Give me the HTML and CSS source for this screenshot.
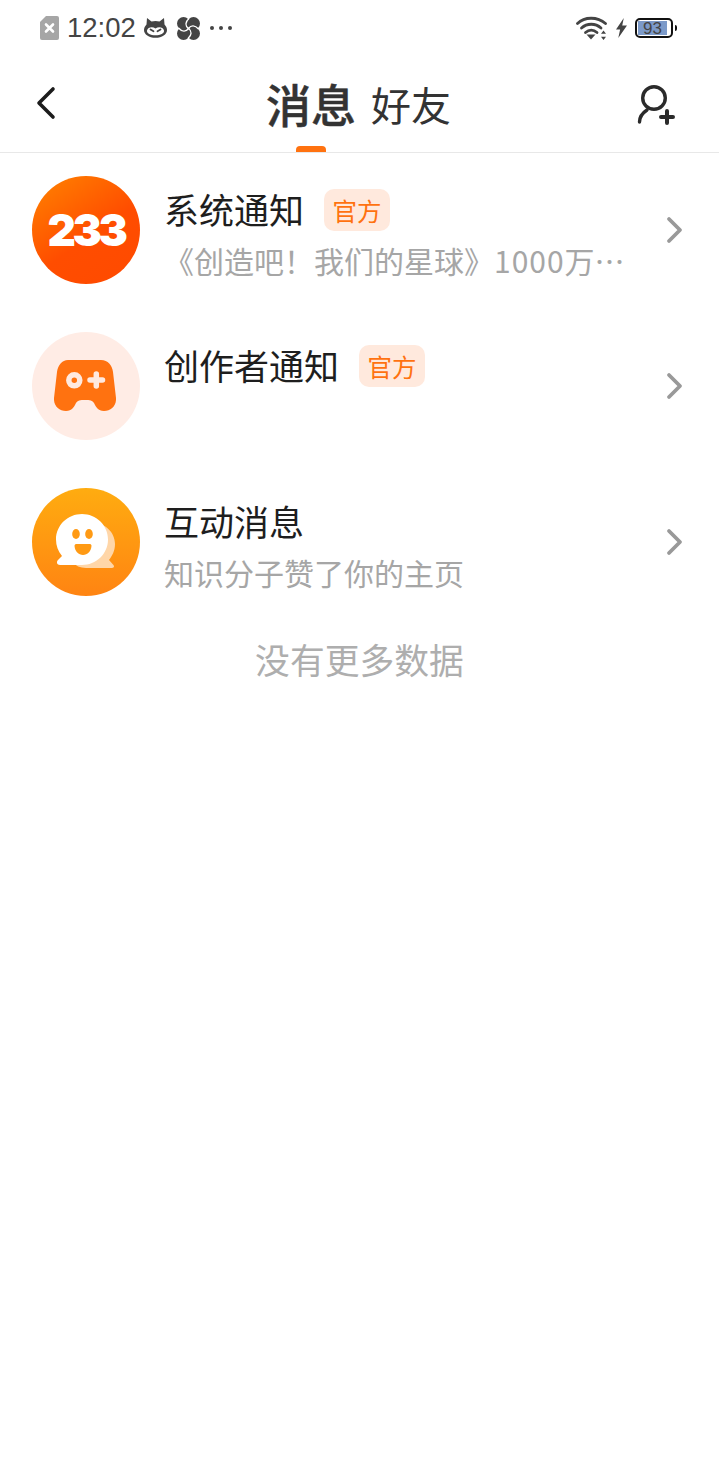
FILE: index.html
```html
<!DOCTYPE html>
<html lang="zh-CN">
<head>
	<meta charset="utf-8">
	<meta name="viewport" content="width=device-width, initial-scale=1.0">
	<title>消息</title>
	<link rel="stylesheet" href="styles.css">
</head>
<body>
	<div class="status">
		<svg class="sim" width="19" height="24" viewBox="0 0 19 24">
			<path d="M6 0H17a2 2 0 0 1 2 2V22a2 2 0 0 1-2 2H2a2 2 0 0 1-2-2V6Z" fill="#a6a6a6"/>
			<path d="M6 8.500l7 7M13 8.500l-7 7" stroke="#fff" stroke-width="2.600" stroke-linecap="round"/>
		</svg>
		<span class="clock">12:02</span>
		<svg class="cat" width="23" height="20" viewBox="0 0 23 20">
			<path d="M3 0l4.500 3.500a14 14 0 0 1 8 0L20 0l.5 6.500C22.300 8.500 23 10.300 23 12c0 4.500-5 7.800-11.500 7.800S0 16.500 0 12C0 10.300.7 8.500 2.500 6.500Z" fill="#444"/>
			<path d="M3 12.500c1-3.500 5.500-4 8.500-2 3-2 7.500-1.500 8.500 2 .5 2.800-3.500 4.800-8.500 4.800s-9-2-8.500-4.800Z" fill="#fff"/>
			<path d="M6.500 11.500l3 1.800M16.500 11.500l-3 1.800" stroke="#444" stroke-width="1.800" stroke-linecap="round"/>
		</svg>
		<svg class="fan" width="23" height="23" viewBox="0 0 23 23">
			<g fill="#444">
				<circle cx="6.500" cy="6.500" r="6.500"/>
				<circle cx="16.500" cy="6.500" r="6.500"/>
				<circle cx="16.500" cy="16.500" r="6.500"/>
				<circle cx="6.500" cy="16.500" r="6.500"/>
			</g>
			<g fill="none" stroke="#fff" stroke-width="1.300">
				<path d="M11.500 11.500C8 9 8 5 12 1.500"/>
				<path d="M11.500 11.500C14 8 18 8 21.500 12"/>
				<path d="M11.500 11.500C15 14 15 18 11 21.500"/>
				<path d="M11.500 11.500C9 15 5 15 1.500 11"/>
			</g>
		</svg>
		<span class="dots"><i></i><i></i><i></i></span>
		<span class="status-gap"></span>
		<svg class="wifi" width="31" height="24" viewBox="0 0 31 24" fill="none" stroke="#444" stroke-linecap="round">
			<path d="M1.500 7.500C8.500 .5 21.500 .5 29.500 7.500" stroke-width="2.800"/>
			<path d="M5.500 12c5.500-5 14-5 19.500 0" stroke-width="2.800"/>
			<path d="M9.500 16.500c3.500-3 8-3 11.500 0" stroke-width="2.800"/>
			<path d="M10.500 18.500h9l-4.500 5Z" fill="#444" stroke="none"/>
			<path d="M27.500 14.500l2.500 3.300h-5ZM27.500 24l2.500-3.300h-5Z" fill="#444" stroke="none"/>
		</svg>
		<svg class="bolt" width="11" height="20" viewBox="0 0 12 21" preserveAspectRatio="none">
			<path d="M8.500 0L0 12h4.500L2.500 21 12 8H6.800Z" fill="#444"/>
		</svg>
		<div class="battery"><div class="battery-level">93</div></div>
		<span class="battery-tip"></span>
	</div>

	<header class="nav">
		<svg class="back" width="22" height="34" viewBox="0 0 22 34">
			<path d="M18 3L4 17l14 14" fill="none" stroke="#1c1c1c" stroke-width="3.600" stroke-linecap="round" stroke-linejoin="round"/>
		</svg>
		<div class="tabs">
			<span class="tab tab-active">消息</span>
			<span class="tab">好友</span>
		</div>
		<svg class="add-friend" width="40" height="44" viewBox="0 0 40 44" fill="none" stroke="#2b2b2b" stroke-linecap="round">
			<circle cx="17" cy="16" r="11.300" stroke-width="3.400"/>
			<path d="M2.500 40c0-5 3-9 7.500-12" stroke-width="3.400"/>
			<path d="M24 35H36M30 29V41" stroke-width="4"/>
		</svg>
	</header>

	<main class="list">
		<div class="row">
			<div class="avatar avatar-red"><span class="logo-num">233</span></div>
			<div class="row-text">
				<div class="row-title"><span class="name">系统通知</span><span class="tag">官方</span></div>
				<div class="row-sub">《创造吧！我们的星球》<span class="digits">1000</span>万…</div>
			</div>
			<svg class="chevron" width="18" height="28" viewBox="0 0 18 28"><path d="M3 3l11 11L3 25" fill="none" stroke="#999" stroke-width="3.800" stroke-linecap="round" stroke-linejoin="round"/></svg>
		</div>
		<div class="row">
			<div class="avatar avatar-pale">
				<svg class="pad" width="62" height="54" viewBox="0 0 62 54">
					<path d="M14 1H47C54 1 58 6 59 13L62 39C62.500 47 57 52 50 52 44 52 42 48 40 44 38.500 41.500 36 41 31 41S23.500 41.500 22 44C20 48 18 52 12 52 5 52-.5 47 0 39L3 13C4 6 8 1 14 1Z" fill="#ff7210"/>
					<circle cx="20.300" cy="21.300" r="5.500" fill="none" stroke="#ffe9df" stroke-width="5.500"/>
					<path d="M36 21H48.500M42.300 15V27" stroke="#ffe9df" stroke-width="5.500" stroke-linecap="round"/>
				</svg>
			</div>
			<div class="row-text">
				<div class="row-title"><span class="name">创作者通知</span><span class="tag">官方</span></div>
			</div>
			<svg class="chevron" width="18" height="28" viewBox="0 0 18 28"><path d="M3 3l11 11L3 25" fill="none" stroke="#999" stroke-width="3.800" stroke-linecap="round" stroke-linejoin="round"/></svg>
		</div>
		<div class="row">
			<div class="avatar avatar-amber">
				<svg width="60" height="56" viewBox="0 0 60 56">
					<path d="M32 9C47 7 59 17 59 30 59 37 56 42 53 46L57 50.500C59 52.500 58 54 55 54H30C18 54 12 45 12 31S20 11 32 9Z" fill="#ffd6a8"/>
					<path d="M26 0C40 0 52 11 52 25.500S40 51 26 51H4C1 51 0 48 2 46L6 42C2 37 0 32 0 25.500 0 11 12 0 26 0Z" fill="#fff"/>
					<ellipse cx="20" cy="20" rx="3.800" ry="5" fill="#ff9a14"/>
					<ellipse cx="33" cy="20" rx="3.800" ry="5" fill="#ff9a14"/>
					<path d="M20 30H34C35 30 35.500 31 35.500 32 35 37.500 31.500 41 27 41S19 37.500 18.500 32C18.500 31 19 30 20 30Z" fill="#ff9a14"/>
				</svg>
			</div>
			<div class="row-text">
				<div class="row-title"><span class="name">互动消息</span></div>
				<div class="row-sub">知识分子赞了你的主页</div>
			</div>
			<svg class="chevron" width="18" height="28" viewBox="0 0 18 28"><path d="M3 3l11 11L3 25" fill="none" stroke="#999" stroke-width="3.800" stroke-linecap="round" stroke-linejoin="round"/></svg>
		</div>
		<p class="no-more">没有更多数据</p>
	</main>
</body>
</html>
```

FILE: styles.css
```css
body {
	margin: 0;
	background: #fff;
	font-family: "Noto Sans CJK SC", "Noto Sans", sans-serif;
	overflow: hidden;
}

.status {
	height: 56px;
	display: flex;
	align-items: center;
	padding: 0 42px 0 40px;
	color: #444;
}
.clock {
	font-family: "Liberation Sans", sans-serif;
	font-size: 27.500px;
	margin: 0 8px;
}
.fan {
	margin-left: 10px;
}
.dots {
	display: flex;
	gap: 5px;
	margin-left: 10px;
}
.dots i {
	width: 4px;
	height: 4px;
	border-radius: 50%;
	background: #444;
}
.status-gap {
	flex: 1;
}
.bolt {
	margin-left: 9px;
}
.battery {
	box-sizing: border-box;
	width: 38px;
	height: 20px;
	margin-left: 8px;
	border: 2px solid #111;
	border-radius: 5px;
	padding: 1px;
}
.battery-level {
	height: 14px;
	width: 29px;
	background: #7c9ac9;
	color: #444;
	font-family: "Liberation Sans", sans-serif;
	font-size: 17px;
	line-height: 15px;
	text-align: center;
}
.battery-tip {
	width: 2px;
	height: 6px;
	margin-left: 2px;
	background: #111;
	border-radius: 0 2px 2px 0;
}

.nav {
	height: 96px;
	display: grid;
	grid-template-columns: 1fr auto 1fr;
	align-items: center;
	padding: 0 43px 0 35px;
	border-bottom: 1px solid #e8e8e8;
}
.back {
	margin-top: -2px;
}
.tabs {
	display: flex;
	align-items: center;
	gap: 15px;
	height: 96px;
	margin-left: 6px;
}
.tab {
	position: relative;
	font-size: 40px;
	line-height: 96px;
	color: #333;
}
.tab-active {
	font-size: 45px;
	font-weight: 500;
	-webkit-text-stroke: .5px #333;
}
.tab-active::after {
	content: "";
	position: absolute;
	left: 50%;
	bottom: 0;
	width: 30px;
	height: 6px;
	margin-left: -15px;
	background: #ff7210;
	border-radius: 4px 4px 0 0;
}
.add-friend {
	justify-self: end;
	margin-top: -1px;
	margin-right: -1px;
}

.list {
	padding-top: 23px;
}
.row {
	display: flex;
	align-items: flex-start;
	padding: 0 35px 0 32px;
	height: 108px;
	margin-bottom: 48px;
}
.avatar {
	flex: none;
	width: 108px;
	height: 108px;
	border-radius: 50%;
	display: flex;
	align-items: center;
	justify-content: center;
}
.avatar-red {
	background: linear-gradient(145deg, #ff7a00 10%, #ff4d00 55%, #ff4a00);
}
.avatar-pale {
	background: #ffece5;
}
.avatar-amber {
	background: linear-gradient(180deg, #ffac10, #ff8412);
}
.pad {
	margin-left: -2px;
}
.logo-num {
	font-family: Inter, sans-serif;
	font-weight: 900;
	font-size: 44px;
	line-height: 44px;
	color: #fff;
	letter-spacing: -3.500px;
}
.row-text {
	flex: 1;
	min-width: 0;
	margin-left: 24px;
	padding-top: 13px;
}
.row-title {
	display: flex;
	align-items: center;
	height: 42px;
	font-size: 35px;
	line-height: 42px;
	color: #1e1e1e;
}
.name {
	margin-top: -2px;
}
.tag {
	width: 66px;
	height: 42px;
	margin-left: 20px;
	border-radius: 10px;
	background: #ffe9dd;
	color: #ff7210;
	font-size: 24.500px;
	line-height: 44px;
	text-align: center;
}
.row-sub {
	margin-top: 8px;
	font-size: 30px;
	line-height: 42px;
	color: #a6a6a6;
	white-space: nowrap;
}
.digits {
	letter-spacing: 1px;
}
.chevron {
	flex: none;
	align-self: center;
	margin-left: 16px;
}
.no-more {
	margin: -10px 0 0;
	text-align: center;
	font-size: 34.800px;
	line-height: 50px;
	color: #aeaeae;
}
```
